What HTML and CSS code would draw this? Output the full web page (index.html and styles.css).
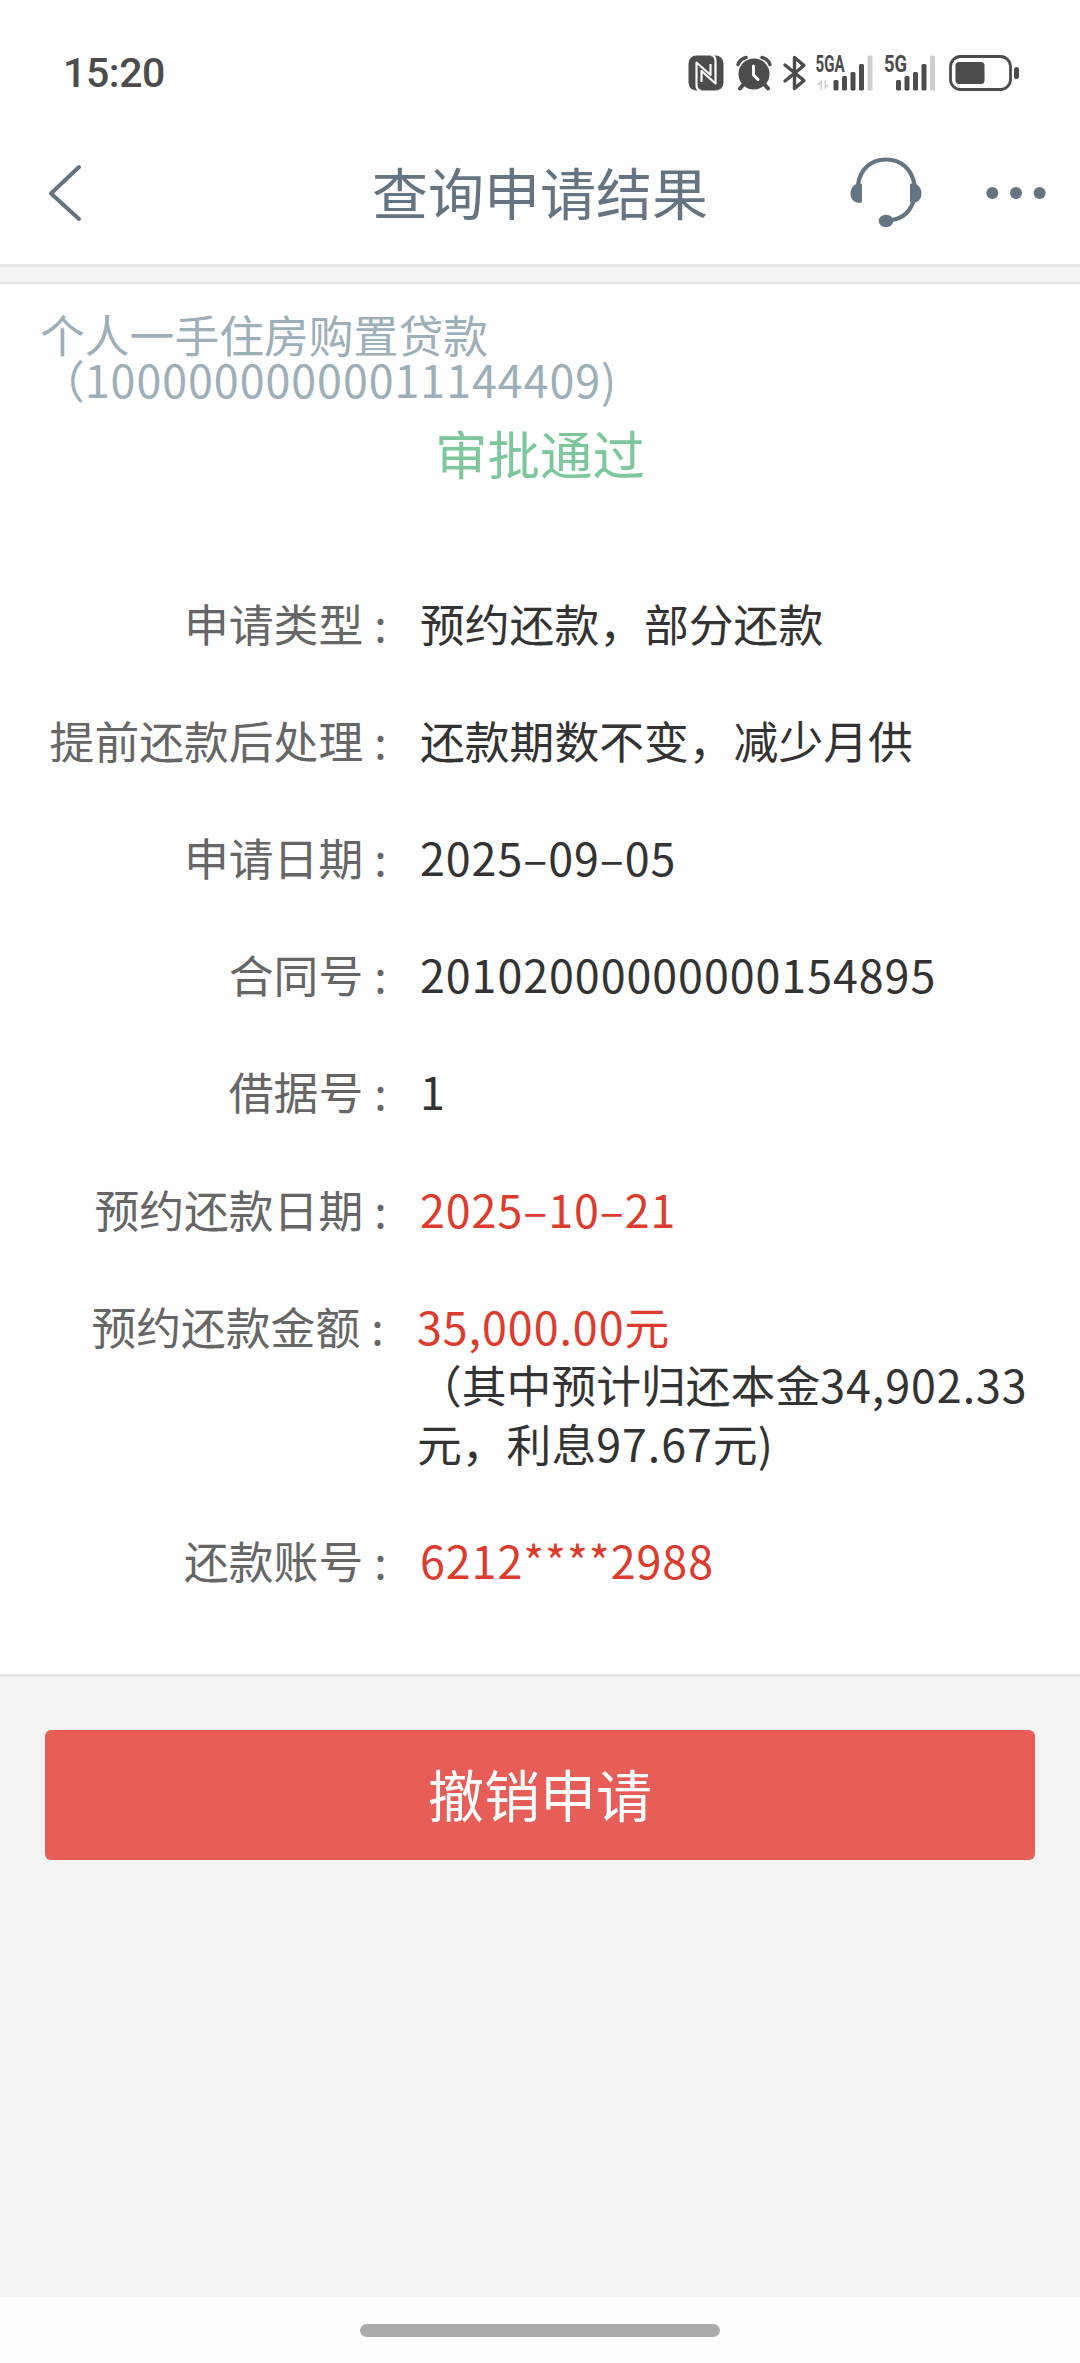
FILE: index.html
```html
<!DOCTYPE html>
<html lang="zh-CN">

<head>
  <meta charset="UTF-8">
  <meta name="viewport" content="width=device-width, initial-scale=1.0">
  <title>查询申请结果</title>
  <link rel="stylesheet" href="styles.css">
</head>

<body>
  <div class="status-bar">
    <div class="time">15:20</div>
    <div class="status-icons">
      <!-- NFC -->
      <svg class="icon-nfc" width="36" height="36" viewBox="0 0 36 36">
        <rect x="0.5" y="0.5" width="35" height="35" rx="8" fill="#4c4c4c"/>
        <path d="M13 36Q8.500 35 8.500 30V7.500L22.500 20V9M23 0Q27.500 1 27.500 6V28.500L13.500 16V27" fill="none" stroke="#fefefe" stroke-width="2.200" stroke-linejoin="round"/>
      </svg>
      <!-- alarm -->
      <svg class="icon-alarm" width="36" height="36" viewBox="0 0 36 36">
        <circle cx="18" cy="19" r="15.500" fill="#4c4c4c"/>
        <path d="M2 9.500Q4 4 10 2.500M34 9.500Q32 4 26 2.500" fill="none" stroke="#4c4c4c" stroke-width="3.400" stroke-linecap="round"/>
        <path d="M7 30l-3 3.500M29 30l3 3.500" stroke="#4c4c4c" stroke-width="4" stroke-linecap="round"/>
        <path d="M17.500 11v9l4.500 4.500" fill="none" stroke="#fefefe" stroke-width="3" stroke-linecap="round" stroke-linejoin="round"/>
      </svg>
      <!-- bluetooth -->
      <svg class="icon-bt" width="24" height="36" viewBox="0 0 24 36">
        <path d="M2 10l19 15.500-9.500 8V2.500l9.500 8L2 26" fill="none" stroke="#4c4c4c" stroke-width="3.400" stroke-linecap="round" stroke-linejoin="round"/>
      </svg>
      <!-- SIM 1 -->
      <svg class="icon-sim1" width="60" height="36" viewBox="0 0 60 36">
        <text class="net" x="0.5" y="17" textLength="29" lengthAdjust="spacingAndGlyphs">5GA</text>
        <path d="M2 30l5-5.500V35.500H5.500V30zM14 30l-4.500 5V25h1.500v5z" fill="#cfcfcf"/>
        <rect x="18.500" y="25" width="5" height="10.500" rx="1.500" fill="#4c4c4c"/>
        <rect x="27" y="21" width="5" height="14.500" rx="1.500" fill="#4c4c4c"/>
        <rect x="35.500" y="17" width="5" height="18.500" rx="1.500" fill="#4c4c4c"/>
        <rect x="44" y="9" width="5" height="26.500" rx="1.500" fill="#4c4c4c"/>
        <rect x="52.500" y="0.500" width="5" height="35" rx="1.500" fill="#cfcfcf"/>
      </svg>
      <!-- SIM 2 -->
      <svg class="icon-sim2" width="54" height="36" viewBox="0 0 54 36">
        <text class="net" x="0" y="17" textLength="23" lengthAdjust="spacingAndGlyphs">5G</text>
        <rect x="12" y="25" width="5" height="10.500" rx="1.500" fill="#4c4c4c"/>
        <rect x="20.500" y="21" width="5" height="14.500" rx="1.500" fill="#4c4c4c"/>
        <rect x="29" y="17" width="5" height="18.500" rx="1.500" fill="#4c4c4c"/>
        <rect x="37.500" y="9" width="5" height="26.500" rx="1.500" fill="#4c4c4c"/>
        <rect x="46" y="0.500" width="5" height="35" rx="1.500" fill="#cfcfcf"/>
      </svg>
      <!-- battery -->
      <svg class="icon-battery" width="71" height="36" viewBox="0 0 71 36">
        <rect x="1.500" y="1.500" width="60" height="33" rx="10" fill="none" stroke="#4c4c4c" stroke-width="2.800"/>
        <rect x="6.500" y="7" width="29" height="22" rx="3.500" fill="#4c4c4c"/>
        <rect x="65" y="12" width="5" height="12" rx="2.500" fill="#4c4c4c"/>
      </svg>
    </div>
  </div>

  <header class="header">
    <svg class="back" width="36" height="58" viewBox="0 0 36 58">
      <path d="M32 3L4 29.500L32 55" fill="none" stroke="#657482" stroke-width="4" stroke-linecap="round" stroke-linejoin="round"/>
    </svg>
    <h1>查询申请结果</h1>
    <div class="header-actions">
      <svg width="72" height="72" viewBox="0 0 72 72" fill="#657482">
        <path d="M8 28C10 12 21 2.500 36 2.500S62 12 64.500 28M64 42C61 54 53 61.500 41 63" fill="none" stroke="#657482" stroke-width="4.200"/>
        <path d="M8 26.500h3Q12 26.500 12 28v16Q12 46 10 46C4 46 0.500 42 0.500 36.500C0.500 31.500 3.500 27.500 8 26.500z"/>
        <path d="M64 26.500h-3Q60 26.500 60 28v16Q60 46 62 46C68 46 71.500 42 71.500 36.500C71.500 31.500 68.500 27.500 64 26.500z"/>
        <ellipse cx="36" cy="64" rx="7.300" ry="6.200"/>
      </svg>
      <svg width="60" height="12" viewBox="0 0 60 12" fill="#657482">
        <circle cx="6.300" cy="6" r="6"/>
        <circle cx="30" cy="6" r="6"/>
        <circle cx="53.600" cy="6" r="6"/>
      </svg>
    </div>
  </header>

  <main>
    <section class="card">
      <div class="product">
        <div>个人一手住房购置贷款</div>
        <div>（<span class="num">10000000000011144409</span>)</div>
      </div>
      <div class="state">审批通过</div>

      <div class="details">
        <div class="row">
          <div class="label">申请类型<span>:</span></div>
          <div class="value">预约还款，部分还款</div>
        </div>
        <div class="row">
          <div class="label">提前还款后处理<span>:</span></div>
          <div class="value">还款期数不变，减少月供</div>
        </div>
        <div class="row">
          <div class="label">申请日期<span>:</span></div>
          <div class="value num">2025<i>–</i>09<i>–</i>05</div>
        </div>
        <div class="row">
          <div class="label">合同号<span>:</span></div>
          <div class="value num">20102000000000154895</div>
        </div>
        <div class="row">
          <div class="label">借据号<span>:</span></div>
          <div class="value num">1</div>
        </div>
        <div class="row">
          <div class="label">预约还款日期<span>:</span></div>
          <div class="value num red">2025<i>–</i>10<i>–</i>21</div>
        </div>
        <div class="row row-amount">
          <div class="label">预约还款金额<span>:</span></div>
          <div class="value">
            <span class="num red">35,000.00</span><span class="red">元</span><br>
            （其中预计归还本金<span class="num">34,902.33</span><br>
            元，利息<span class="num">97.67</span>元)
          </div>
        </div>
        <div class="row">
          <div class="label">还款账号<span>:</span></div>
          <div class="value num red">6212****2988</div>
        </div>
      </div>
    </section>

    <button type="button" class="btn-cancel">撤销申请</button>
  </main>

  <footer class="nav-bar">
    <div class="nav-handle"></div>
  </footer>
</body>

</html>
```

FILE: styles.css
```css
* {
  box-sizing: border-box;
}

body {
  font-family: 'Noto Sans CJK SC', sans-serif;
  background-color: #f4f4f4;
  color: #333;
  margin: 0;
  height: 2363px;
  display: flex;
  flex-direction: column;
}

svg {
  display: block;
  flex-shrink: 0;
  overflow: visible;
}

.status-bar {
  display: flex;
  justify-content: space-between;
  align-items: center;
  height: 122px;
  padding: 24px 60px 0 63px;
  background-color: #fefefe;
}

.time {
  font-family: Roboto, sans-serif;
  font-size: 41px;
  font-weight: 500;
  line-height: 48px;
  letter-spacing: -0.4px;
  color: #4c4c4c;
}

.status-icons {
  display: flex;
  align-items: center;
}

.icon-alarm {
  margin-left: 12px;
}

.icon-bt {
  margin-left: 11px;
}

.icon-sim1 {
  margin-left: 8px;
}

.icon-sim2 {
  margin-left: 9px;
}

.icon-battery {
  margin-left: 11px;
}

.net {
  font-family: Roboto, sans-serif;
  font-size: 23px;
  font-weight: 700;
  fill: #4c4c4c;
}

.header {
  display: grid;
  grid-template-columns: 1fr auto 1fr;
  align-items: center;
  height: 145px;
  padding: 0 34px 0 47px;
  background-color: #fefefe;
  border-bottom: 3px solid #e5e5e5;
}

.header h1 {
  margin: 0 13px 4px 0;
  font-size: 56px;
  font-weight: 400;
  line-height: 80px;
  color: #657482;
}

.header-actions {
  display: flex;
  align-items: center;
  justify-content: flex-end;
  gap: 64px;
}

main {
  flex: 1;
}

.card {
  height: 1395px;
  margin-top: 15px;
  padding: 28px 40px 0;
  background-color: #fefefe;
  border-top: 2px solid #e5e5e5;
  border-bottom: 3px solid #e5e5e5;
}

.product {
  font-size: 44.8px;
  line-height: 44.8px;
  color: #9dafb8;
}

.num {
  letter-spacing: 0.95px;
}

.state {
  margin-top: 17px;
  font-size: 52.5px;
  line-height: 66px;
  text-align: center;
  color: #7cc79b;
}

.details {
  margin-top: 109px;
  font-size: 44.8px;
  line-height: 58.6px;
}

.row {
  display: flex;
  margin-bottom: 58.6px;
}

.label {
  display: flex;
  justify-content: flex-end;
  width: 368px;
  margin-right: 12px;
  flex-shrink: 0;
  color: #666;
}

.label span {
  width: 44.8px;
  padding-left: 11px;
}

.value {
  white-space: nowrap;
}

.value i {
  font-style: normal;
}

.row-amount {
  margin-left: -3px;
}

.red {
  color: #dc3b2d;
}

.btn-cancel {
  display: block;
  width: 990px;
  height: 130px;
  margin: 53px auto 0;
  padding: 0 0 6px;
  border: none;
  border-radius: 6px;
  background-color: #e75d58;
  color: #fff;
  font-family: inherit;
  font-size: 56px;
}

.nav-bar {
  display: flex;
  justify-content: center;
  height: 66px;
  padding-top: 27px;
  background-color: #fdfdfd;
}

.nav-handle {
  width: 360px;
  height: 13px;
  border-radius: 7px;
  background-color: #ababab;
}
```
